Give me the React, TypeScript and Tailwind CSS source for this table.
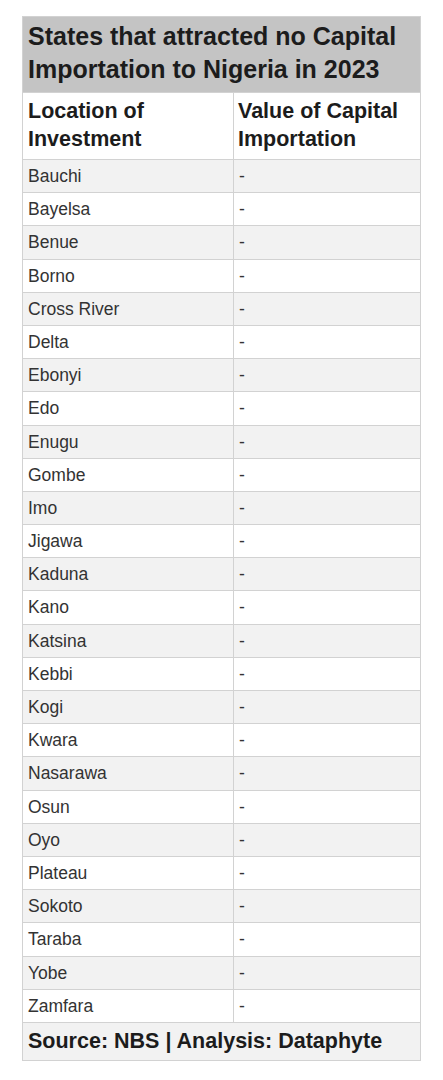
const states = [
  "Bauchi",
  "Bayelsa",
  "Benue",
  "Borno",
  "Cross River",
  "Delta",
  "Ebonyi",
  "Edo",
  "Enugu",
  "Gombe",
  "Imo",
  "Jigawa",
  "Kaduna",
  "Kano",
  "Katsina",
  "Kebbi",
  "Kogi",
  "Kwara",
  "Nasarawa",
  "Osun",
  "Oyo",
  "Plateau",
  "Sokoto",
  "Taraba",
  "Yobe",
  "Zamfara",
];

export default function App() {
  return (
    <div className="min-h-[1080px] bg-white pt-[16px] pl-[22px] font-[family-name:Liberation_Sans,Arial,sans-serif]">
      <div className="w-[399px] border border-[#d2d2d2]">
        <div className="h-[75px] bg-[#c4c4c4] px-[5px] pt-[3px] text-[25px] font-bold leading-[33px] text-[#1c1c1c]">
          States that attracted no Capital Importation to Nigeria in 2023
        </div>
        <div className="grid h-[67px] grid-cols-[211px_1fr] border-t border-[#d2d2d2] text-[21.5px] font-bold leading-[27.5px] text-[#1c1c1c]">
          <div className="border-r border-[#d2d2d2] px-[5px] pt-[5px]">Location of Investment</div>
          <div className="px-[4px] pt-[5px]">Value of Capital Importation</div>
        </div>
        {states.map((s, i) => (
          <div
            key={s}
            className={`grid h-[33.2px] grid-cols-[211px_1fr] border-t border-[#d2d2d2] text-[17.5px] leading-[32px] text-[#333] ${
              i % 2 === 0 ? "bg-[#f2f2f2]" : "bg-white"
            }`}
          >
            <div className="border-r border-[#d2d2d2] px-[5px]">{s}</div>
            <div className="px-[5px]">-</div>
          </div>
        ))}
        <div className="h-[38px] border-t border-[#d2d2d2] bg-[#f2f2f2] px-[5px] text-[21.5px] font-bold leading-[37px] text-[#1c1c1c]">
          Source: NBS | Analysis: Dataphyte
        </div>
      </div>
    </div>
  );
}
